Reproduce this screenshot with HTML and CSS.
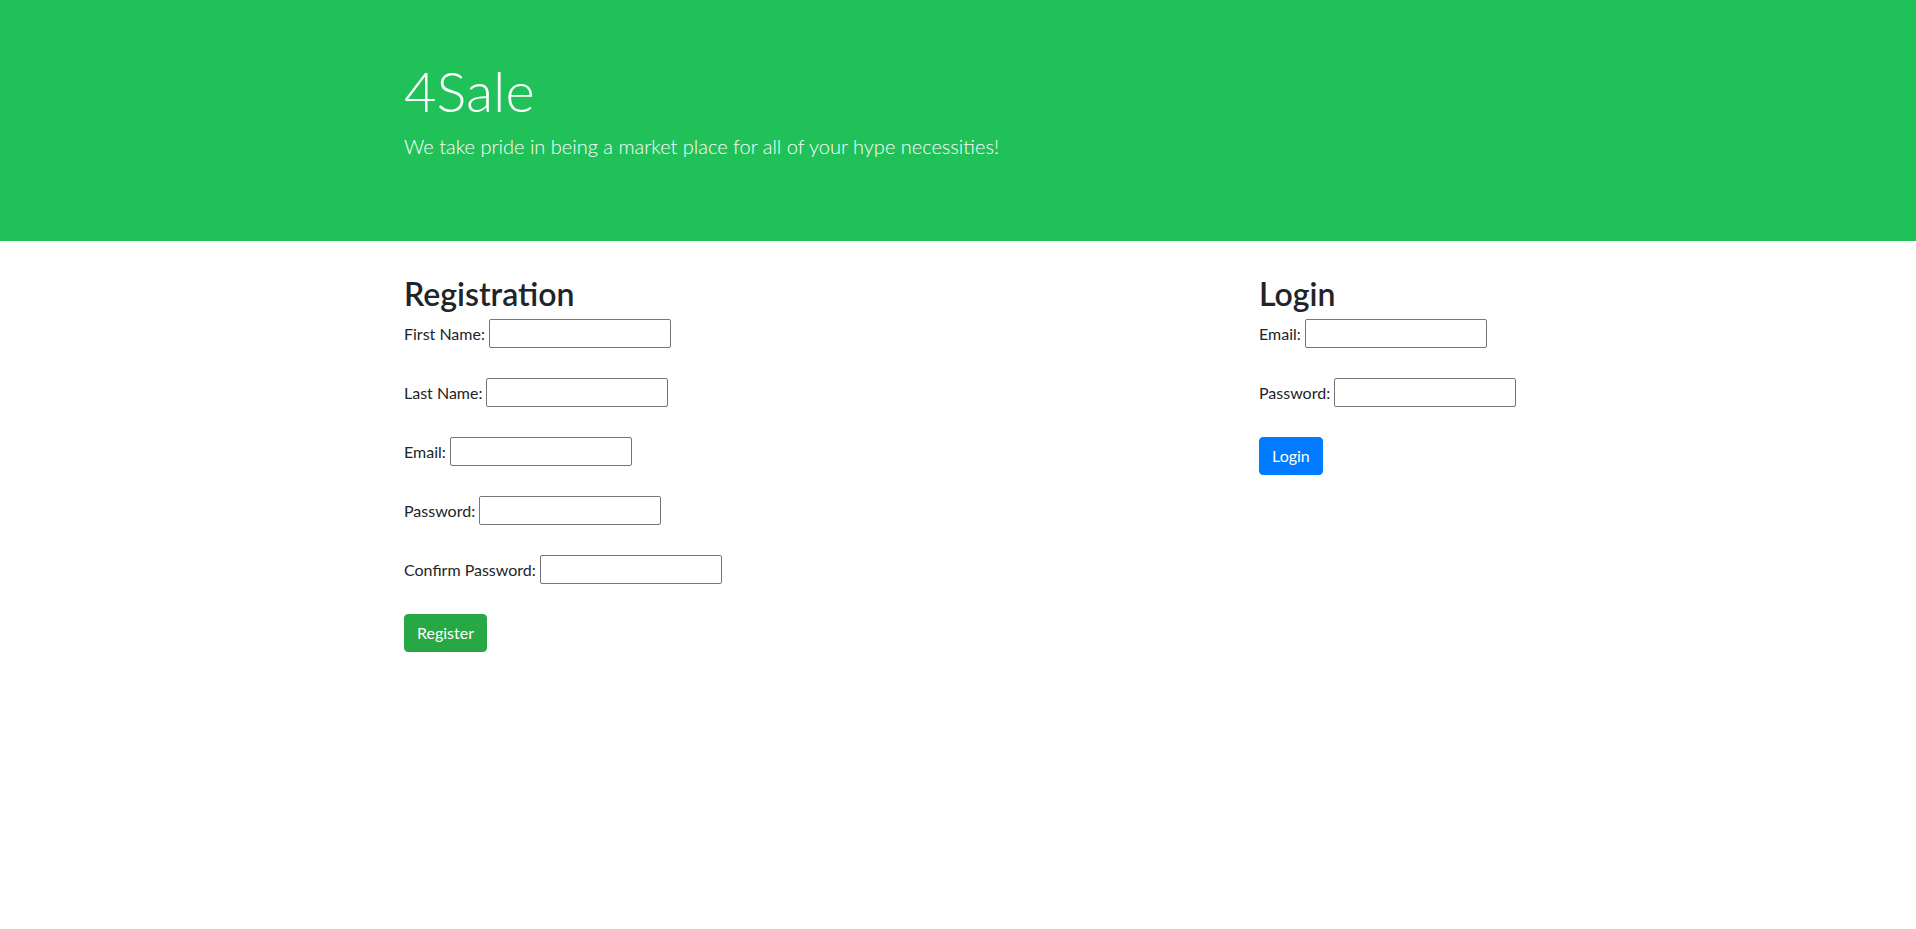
FILE: index.html
```html
<!DOCTYPE html>
<html lang="en">
<head>
<meta charset="utf-8">
<title>4Sale</title>
<link rel="stylesheet" href="styles.css">
</head>
<body>
<header class="hero">
  <div class="container">
    <h1 class="hero-title">4Sale</h1>
    <p class="hero-lead">We take pride in being a market place for all of your hype necessities!</p>
  </div>
</header>
<main class="container">
  <div class="columns">
    <section class="panel">
      <h2 class="panel-title">Registration</h2>
      <form class="form">
        <div class="field"><label>First Name:</label><input type="text"></div>
        <div class="field"><label>Last Name:</label><input type="text"></div>
        <div class="field"><label>Email:</label><input type="text"></div>
        <div class="field"><label>Password:</label><input type="password"></div>
        <div class="field"><label>Confirm Password:</label><input type="password"></div>
        <div class="actions"><button type="button" class="btn btn-success">Register</button></div>
      </form>
    </section>
    <section class="panel">
      <h2 class="panel-title">Login</h2>
      <form class="form">
        <div class="field"><label>Email:</label><input type="text"></div>
        <div class="field"><label>Password:</label><input type="password"></div>
        <div class="actions"><button type="button" class="btn btn-primary">Login</button></div>
      </form>
    </section>
  </div>
</main>
</body>
</html>
```
FILE: styles.css
```css
* { box-sizing: border-box; }
html, body { margin: 0; padding: 0; }
body {
  font-family: "Lato", "Open Sans", "Liberation Sans", sans-serif;
  font-size: 16px;
  line-height: 1.5;
  color: #212529;
  background: #fff;
}
.container {
  width: 1110px;
  margin: 0 auto;
  padding-left: 1px;
}
.hero {
  background: #21c15a;
  color: #fff;
  height: 241px;
  padding-top: 57px;
}
.hero-title {
  margin: 0 0 7px;
  font-size: 56px;
  font-weight: 300;
  line-height: 1.2;
}
.hero-lead {
  margin: 0;
  font-size: 20px;
  font-weight: 300;
  line-height: 1.5;
}
.columns {
  display: grid;
  grid-template-columns: 825px 254px;
  column-gap: 30px;
  padding-top: 34px;
}
.panel-title {
  margin: 0 0 6px;
  font-size: 32px;
  font-weight: 600;
  line-height: 1.2;
}
.form {
  display: flex;
  flex-direction: column;
  gap: 30px;
}
.field {
  display: flex;
  align-items: center;
  gap: 4px;
  height: 29px;
}
.field input {
  width: 182px;
  height: 29px;
  border: 1px solid #767676;
  border-radius: 2px;
  padding: 1px 2px;
  font: inherit;
}
.actions { display: flex; }
.btn {
  font: inherit;
  line-height: 1.5;
  color: #fff;
  border: 1px solid transparent;
  border-radius: 4px;
  padding: 6px 12px;
  height: 38px;
}
.btn-success { background: #28a745; border-color: #28a745; }
.btn-primary { background: #007bff; border-color: #007bff; }
```
